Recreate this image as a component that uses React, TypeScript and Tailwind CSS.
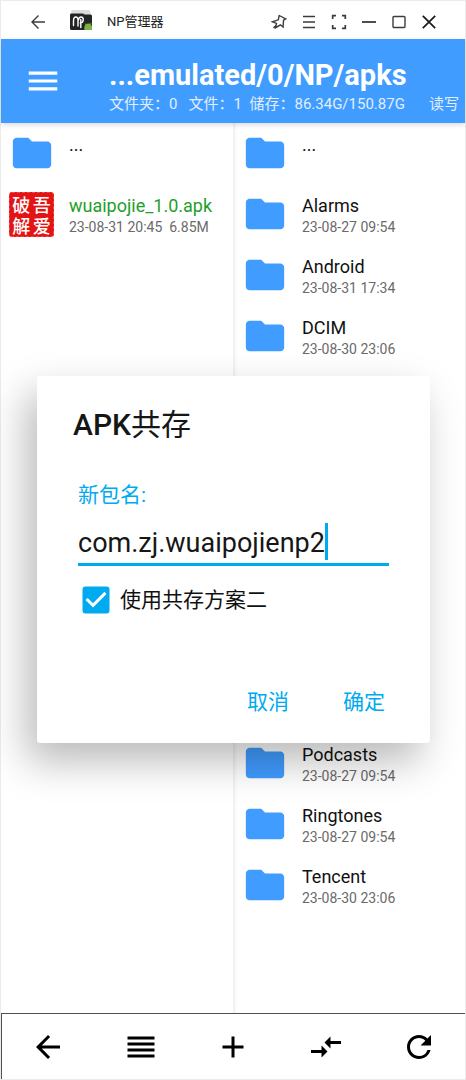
import type { ReactNode } from "react";
import {
  MdAdd,
  MdArrowBack,
  MdCheckBox,
  MdCompareArrows,
  MdFolder,
  MdMenu,
  MdRefresh,
  MdReorder,
} from "react-icons/md";

type Entry = { name: string; date: string };

const folders: Entry[] = [
  { name: "Alarms", date: "23-08-27 09:54" },
  { name: "Android", date: "23-08-31 17:34" },
  { name: "DCIM", date: "23-08-30 23:06" },
  { name: "Documents", date: "23-08-27 09:54" },
  { name: "Download", date: "23-08-27 09:54" },
  { name: "Movies", date: "23-08-27 09:54" },
  { name: "Music", date: "23-08-27 09:54" },
  { name: "Notifications", date: "23-08-27 09:54" },
  { name: "Pictures", date: "23-08-27 09:54" },
  { name: "Podcasts", date: "23-08-27 09:54" },
  { name: "Ringtones", date: "23-08-27 09:54" },
  { name: "Tencent", date: "23-08-30 23:06" },
];

function AppLogo() {
  return (
    <svg viewBox="0 0 22 20" className="h-5 w-[22px]" aria-hidden="true">
      <path d="M1.500 0h18.500l.6 5H1z" fill="#dcdcda" />
      <path d="M0 4.800Q0 3.500 1.500 3.500H13l1.500 1h6Q22 4.500 22 6V18.500Q22 20 20.500 20H1.500Q0 20 0 18.500z" fill="#232425" />
      <path
        d="M3.500 15.500V11Q3.500 7 5.800 7T8 10.500V16M8.500 10Q8.800 7 11 7T13.300 9.800Q13 13 10.300 13M10.800 9.500V17.500"
        fill="none"
        stroke="#fff"
        strokeWidth="1.400"
        strokeLinecap="round"
      />
      <path d="M14.500 20a4 4.800 0 0 1 7.500-3.500V20z" fill="#7cb342" />
      <path d="M16.200 15.500l-1-2M20.500 14.500l.6-1.800" stroke="#7cb342" strokeWidth=".8" />
    </svg>
  );
}

function WindowButton({ label, children }: { label: string; children: ReactNode }) {
  return (
    <button type="button" aria-label={label} className="flex h-[38px] w-[30px] items-center justify-center">
      <svg
        viewBox="0 0 16 16"
        className="size-4"
        fill="none"
        stroke="#3c3c3c"
        strokeWidth="1.400"
        strokeLinecap="butt"
        aria-hidden="true"
      >
        {children}
      </svg>
    </button>
  );
}

function TitleBar() {
  return (
    <div className="flex h-[38px] items-center justify-between bg-white pt-1 pr-[21px] pl-[22px]">
      <div className="flex items-center">
        <WindowButton label="后退">
          <path d="M15 8H2M8.500 1.500L2 8l6.500 6.500" />
        </WindowButton>
        <span className="mb-1 ml-[17px]">
          <AppLogo />
        </span>
        <span className="ml-[15px] text-[13px] text-[#222]">NP管理器</span>
      </div>
      <div className="flex">
        <WindowButton label="置顶">
          <path d="M8.200 1.500l6.500 3.400-2.200 1.300-.4 6.800-2.700-2.200-4.800 2.900.9-4.300L1.500 7.800l5.800-2zM4.800 11.500L2.500 14" />
        </WindowButton>
        <WindowButton label="菜单">
          <path d="M2 2.500h12M2 8h12M2 13.500h12" strokeWidth="1.700" />
        </WindowButton>
        <WindowButton label="全屏">
          <path d="M1.700 5V1.700H5M11 1.700h3.300V5M14.300 11v3.300H11M5 14.300H1.700V11" strokeWidth="1.700" />
        </WindowButton>
        <WindowButton label="最小化">
          <path d="M1 8h14" strokeWidth="1.800" />
        </WindowButton>
        <WindowButton label="最大化">
          <rect x="2" y="2.500" width="12" height="11" rx="1" />
        </WindowButton>
        <WindowButton label="关闭">
          <path d="M1.800 1.800l12.400 12.400M14.200 1.800L1.800 14.200" stroke="#1a1a1a" strokeWidth="1.700" />
        </WindowButton>
      </div>
    </div>
  );
}

function Header() {
  return (
    <header className="relative flex h-[84px] items-center bg-[#409cff] text-white shadow-[0_2px_5px_rgba(0,0,0,0.14)]">
      <button type="button" aria-label="打开菜单" className="ml-[23px]">
        <MdMenu className="size-[38px]" />
      </button>
      <div className="ml-[47px] flex-1 pt-3 pr-[6px]">
        <h1 className="text-[29px] leading-[34px] font-bold whitespace-nowrap">...emulated/0/NP/apks</h1>
        <p className="flex justify-between text-[15px] leading-6 whitespace-pre text-[#e0eeff]">
          <span>{"文件夹：0   文件：1  储存：86.34G/150.87G"}</span>
          <span>读写</span>
        </p>
      </div>
    </header>
  );
}

function ParentRow() {
  return (
    <li className="flex h-[61px] pl-2">
      <MdFolder className="mt-[7px] size-[46px] text-[#409cff]" />
      <span className="mt-[10px] ml-3.5 text-lg leading-6 text-[#111]">...</span>
    </li>
  );
}

function FolderRow({ name, date }: Entry) {
  return (
    <li className="flex h-[61px] pl-2">
      <MdFolder className="mt-[7px] size-[46px] text-[#409cff]" />
      <div className="mt-[10px] ml-3.5 whitespace-nowrap">
        <p className="text-lg leading-6 text-[#111]">{name}</p>
        <p className="text-sm leading-[18px] text-[#6a6a6a]">{date}</p>
      </div>
    </li>
  );
}

function ApkRow() {
  return (
    <li className="flex h-[61px] pl-2">
      <span className="mt-2 grid size-[45px] grid-cols-2 place-items-center rounded-[3px] border border-dashed border-[#f04a4a] bg-[#e51414] px-px font-['Noto_Sans_CJK_SC'] text-lg leading-5 font-medium text-white">
        <span>破</span>
        <span>吾</span>
        <span>解</span>
        <span>爱</span>
      </span>
      <div className="mt-[10px] ml-[15px] whitespace-nowrap">
        <p className="text-lg leading-6 text-[#1f9e2c]">wuaipojie_1.0.apk</p>
        <p className="text-sm leading-[18px] whitespace-pre text-[#6a6a6a]">{"23-08-31 20:45  6.85M"}</p>
      </div>
    </li>
  );
}

function CoexistDialog() {
  return (
    <form
      role="dialog"
      aria-labelledby="dialog-title"
      className="absolute inset-y-0 right-[35px] left-9 my-auto flex h-fit flex-col rounded-[3px] bg-white pt-[27px] pb-5 shadow-[-10px_18px_40px_rgba(0,0,0,0.28)]"
    >
      <h2 id="dialog-title" className="pl-9 text-[30px] leading-[44px] font-medium text-[#161616]">
        APK<span className="font-normal">共存</span>
      </h2>
      <div className="mt-8 mr-[41px] ml-[41px]">
        <label htmlFor="package-name" className="block text-[21px] leading-8 text-[#00aaf0]">
          新包名:
        </label>
        <div className="mt-3 flex border-b-[3px] border-[#00aaf0] pb-[3px]">
          <input
            id="package-name"
            type="text"
            defaultValue="com.zj.wuaipojienp2"
            className="field-sizing-content h-[37px] border-r-[3px] border-[#00aaf0] pt-1 text-[27px] text-[#161616] outline-none"
          />
        </div>
      </div>
      <div className="mt-4 ml-[41px] flex h-9 items-center">
        <span className="grid size-9 place-items-center">
          <input
            id="plan-two"
            type="checkbox"
            defaultChecked
            className="peer col-start-1 row-start-1 size-[26px] appearance-none rounded-[3px] border-2 border-[#00aaf0]"
          />
          <MdCheckBox className="pointer-events-none invisible col-start-1 row-start-1 size-9 text-[#00aaf0] peer-checked:visible" />
        </span>
        <label htmlFor="plan-two" className="ml-[6px] pt-[2px] text-[21px] text-[#111]">
          使用共存方案二
        </label>
      </div>
      <div className="mt-[63px] flex justify-end gap-[54px] pr-[45px] text-[21px] leading-[42px] text-[#00aaf0]">
        <button type="button">取消</button>
        <button type="submit">确定</button>
      </div>
    </form>
  );
}

function BottomBar() {
  const actions = [
    { label: "返回", Icon: MdArrowBack },
    { label: "列表", Icon: MdReorder },
    { label: "新建", Icon: MdAdd },
    { label: "同步路径", Icon: MdCompareArrows },
    { label: "刷新", Icon: MdRefresh },
  ];
  return (
    <nav className="flex h-[66px] border-t border-l border-[#505050] bg-white">
      {actions.map(({ label, Icon }) => (
        <button key={label} type="button" aria-label={label} className="flex flex-1 items-center justify-center">
          <Icon className="size-9 text-black" />
        </button>
      ))}
    </nav>
  );
}

export default function App() {
  return (
    <div className="flex min-h-screen flex-col border border-[#ebebeb] bg-white font-[Roboto,'Noto_Sans_CJK_SC',sans-serif]">
      <TitleBar />
      <div className="relative flex flex-1 flex-col">
        <Header />
        <main className="grid flex-1 grid-cols-2">
          <ul>
            <ParentRow />
            <ApkRow />
          </ul>
          <ul className="bg-linear-to-r from-[#eeeeee] to-white to-[4px] pl-px">
            <ParentRow />
            {folders.map((folder) => (
              <FolderRow key={folder.name} {...folder} />
            ))}
          </ul>
        </main>
        <BottomBar />
        <CoexistDialog />
      </div>
    </div>
  );
}
